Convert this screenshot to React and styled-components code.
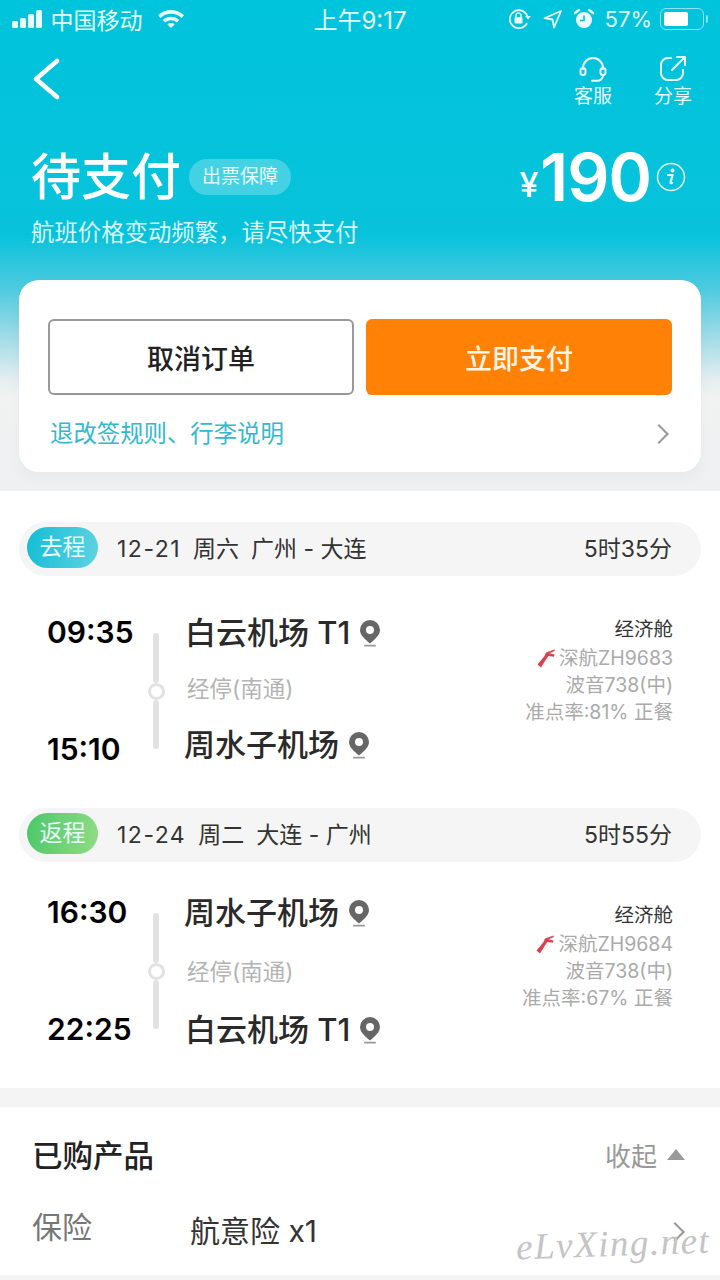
import styled, { createGlobalStyle } from "styled-components";

const Global = createGlobalStyle`
    html, body { margin: 0; padding: 0; background: #f4f4f4; }
    body { font-family: Inter, "Noto Sans CJK SC", sans-serif; }
    * { box-sizing: border-box; }
`;

const flights = [
    {
        tag: "去程", go: true, date: "12-21", day: "周六", line: "广州 - 大连", span: "5时35分", lift: 0, reach: 154,
        from: { time: "09:35", name: "白云机场 T1", shift: 1 },
        to: { time: "15:10", name: "周水子机场", shift: 0 },
        no: "深航ZH9683", ontime: "准点率:81% 正餐",
    },
    {
        tag: "返程", go: false, date: "12-24", day: "周二", line: "大连 - 广州", span: "5时55分", lift: 6, reach: 159,
        from: { time: "16:30", name: "周水子机场", shift: 0 },
        to: { time: "22:25", name: "白云机场 T1", shift: 1 },
        no: "深航ZH9684", ontime: "准点率:67% 正餐",
    },
];

const Pin = () => (
    <PinIcon viewBox="0 0 22 28">
        <path fillRule="evenodd" fill="#666" d="M11 1a10 10 0 0 1 10 10c0 5-5 9.400-10 13.500C6 20.400 1 16 1 11A10 10 0 0 1 11 1zm0 6a4 4 0 1 0 0 8 4 4 0 0 0 0-8z" />
        <rect x="5" y="25.800" width="12" height="1.800" rx="0.900" fill="#999" />
    </PinIcon>
);

const Flight = ({ data }) => (
    <section>
        <Strip>
            <Tag $go={data.go}>{data.tag}</Tag>
            <HeadText>
                <DateText>{data.date}</DateText>
                <span>{data.day}</span>
                <span>{data.line}</span>
            </HeadText>
            <span>{data.span}</span>
        </Strip>
        <Body>
            <Route $lift={data.lift}>
                <Times>
                    <Time>{data.from.time}</Time>
                    <Time>{data.to.time}</Time>
                </Times>
                <Rail>
                    <RailLine />
                    <RailDot />
                    <RailLine />
                </Rail>
                <Stations $reach={data.reach}>
                    <Station $shift={data.from.shift}>{data.from.name}<Pin /></Station>
                    <Stop>经停(南通)</Stop>
                    <Station $shift={data.to.shift}>{data.to.name}<Pin /></Station>
                </Stations>
            </Route>
            <Info>
                <Cabin>经济舱</Cabin>
                <InfoLine>
                    <svg width="18" height="19" viewBox="0 0 18 19">
                        <path fill="#d9434f" d="M0.500 15.500L7.500 7 9 3.500 17.500 0.500l.3 1.500-5.300 2.200 5 1.300-.5 2.300-5.500-.9-2.500 3.600L4 18.500z" />
                    </svg>
                    {data.no}
                </InfoLine>
                <InfoLine>波音738(中)</InfoLine>
                <InfoLine>{data.ontime}</InfoLine>
            </Info>
        </Body>
    </section>
);

const App = () => (
    <Page>
        <Global />
        <Top>
            <StatusBar>
                <StatusSide>
                    <Signal>
                        {[7, 10, 14, 18].map((h) => <i key={h} style={{ height: h }} />)}
                    </Signal>
                    <span>中国移动</span>
                    <svg width="28" height="20" viewBox="0 0 28 20" style={{ marginLeft: 5 }}>
                        <path fill="#eafcff" d="M14 1c5 0 9.600 2 13 5.300l-2.500 2.600A15 15 0 0 0 14 4.700 15 15 0 0 0 3.500 8.900L1 6.300A18.800 18.800 0 0 1 14 1z" />
                        <path fill="#eafcff" d="M14 7.700c3.200 0 6.100 1.200 8.300 3.300l-2.500 2.600A8.400 8.400 0 0 0 14 11.300a8.400 8.400 0 0 0-5.800 2.300L5.700 11A12 12 0 0 1 14 7.700z" />
                        <path fill="#eafcff" d="M14 14c1.400 0 2.700.5 3.600 1.400L14 19l-3.600-3.600c.9-.9 2.200-1.400 3.600-1.400z" />
                    </svg>
                </StatusSide>
                <Clock>上午9:17</Clock>
                <StatusSide $right>
                    <svg width="24" height="22" viewBox="0 0 24 22" fill="none" stroke="#eafcff" strokeWidth="1.800">
                        <path d="M19 15a9 9 0 1 1 .6-6" />
                        <path d="M17 8h6l-3 3.500z" fill="#eafcff" stroke="none" />
                        <rect x="6.500" y="9" width="8" height="6.500" rx="1" fill="#eafcff" stroke="none" />
                        <path d="M8 9V7.500a2.500 2.500 0 0 1 5 0V9" strokeWidth="1.400" />
                    </svg>
                    <svg width="20" height="20" viewBox="0 0 20 20" fill="none" stroke="#eafcff" strokeWidth="1.800" strokeLinejoin="round" style={{ marginLeft: 11 }}>
                        <path d="M18 2L1.500 9.200l8 1.300 1.500 8z" />
                    </svg>
                    <svg width="22" height="22" viewBox="0 0 22 22" style={{ marginLeft: 10 }}>
                        <circle cx="11" cy="12" r="8" fill="#eafcff" />
                        <path d="M11 7.500V12.500H7" fill="none" stroke="#00c3dc" strokeWidth="1.600" />
                        <path d="M2 5l4-3M20 5l-4-3" stroke="#eafcff" strokeWidth="2.400" strokeLinecap="round" />
                    </svg>
                    <Percent>57%</Percent>
                    <Battery><BatteryFill style={{ width: "57%" }} /></Battery>
                    <BatteryCap />
                </StatusSide>
            </StatusBar>

            <Nav>
                <svg width="28" height="42" viewBox="0 0 28 42" fill="none" stroke="#fff" strokeWidth="4.500" strokeLinecap="round" strokeLinejoin="round">
                    <path d="M24 3L3 21l21 18" />
                </svg>
                <NavActions>
                    <NavAction>
                        <svg width="30" height="28" viewBox="0 0 30 28" fill="none" stroke="#eafcff" strokeWidth="2" strokeLinecap="round">
                            <path d="M5 14V13a10 10 0 0 1 20 0v1" />
                            <path d="M5 13a2.500 2.500 0 0 1 2.500 2.500v2a2.500 2.500 0 0 1-5 0v-2A2.500 2.500 0 0 1 5 13z" />
                            <path d="M25 13a2.500 2.500 0 0 0-2.500 2.500v2a2.500 2.500 0 0 0 5 0v-2A2.500 2.500 0 0 0 25 13z" />
                            <path d="M25 21c-.8 3-3 4.800-6 4.800h-5" />
                        </svg>
                        客服
                    </NavAction>
                    <NavAction>
                        <svg width="28" height="28" viewBox="0 0 28 28" fill="none" stroke="#eafcff" strokeWidth="2" strokeLinecap="round" strokeLinejoin="round">
                            <path d="M12 3H9a7 7 0 0 0-7 7v8a7 7 0 0 0 7 7h8a7 7 0 0 0 7-7v-3" />
                            <path d="M13 15L26 2M18 2h8v8" />
                        </svg>
                        分享
                    </NavAction>
                </NavActions>
            </Nav>

            <Summary>
                <div>
                    <TitleRow>
                        <Title>待支付</Title>
                        <Badge>出票保障</Badge>
                    </TitleRow>
                    <Subtitle>航班价格变动频繁，请尽快支付</Subtitle>
                </div>
                <Price>
                    <Yen>¥</Yen>190
                    <svg width="30" height="30" viewBox="0 0 30 30" style={{ marginLeft: 5 }}>
                        <circle cx="15" cy="15" r="13.500" fill="none" stroke="#eafcff" strokeWidth="1.500" />
                        <circle cx="16.500" cy="8.500" r="2" fill="#eafcff" />
                        <path d="M12 13h4.500l-2 7.500c-.2.800.5 1 1.500.4" fill="none" stroke="#eafcff" strokeWidth="2.200" strokeLinecap="round" />
                    </svg>
                </Price>
            </Summary>

            <Card>
                <Buttons>
                    <Button>取消订单</Button>
                    <Button $primary>立即支付</Button>
                </Buttons>
                <RuleLink>
                    退改签规则、行李说明
                    <Chevron />
                </RuleLink>
            </Card>
        </Top>

        <Flights>
            {flights.map((f) => <Flight key={f.tag} data={f} />)}
        </Flights>

        <Products>
            <ProductsHead>
                已购产品
                <Collapse>收起<Triangle /></Collapse>
            </ProductsHead>
            <ProductRow>
                <ProductLabel>保险</ProductLabel>
                <ProductName>航意险 x1</ProductName>
                <RowChevron />
            </ProductRow>
            <Watermark>eLvXing.net</Watermark>
        </Products>
    </Page>
);

const Page = styled.div`
    width: 720px;
    height: 1280px;
    overflow: hidden;
    background: #f4f4f4;
`;

const Top = styled.header`
    height: 491px;
    padding-top: 1px;
    background: linear-gradient(#00c3dc 0, #08c2db 235px, #50cbdf 290px, #a5dde8 340px, #e5eef0 380px, #f1f2f2 396px, #eef0f1 491px);
`;

const StatusBar = styled.div`
    display: grid;
    grid-template-columns: 1fr auto 1fr;
    align-items: center;
    height: 36px;
    margin-bottom: -4px;
    padding: 0 12px 4px;
    color: #e4fbff;
    font-size: 23px;
`;

const StatusSide = styled.div`
    display: flex;
    align-items: center;
    justify-content: ${(p) => (p.$right ? "flex-end" : "flex-start")};
    gap: ${(p) => (p.$right ? "0" : "9px")};
`;

const Signal = styled.div`
    display: flex;
    align-items: flex-end;
    gap: 2.500px;
    height: 18px;
    i { display: block; width: 5.500px; background: #eafcff; border-radius: 1.500px; }
`;

const Clock = styled.div`
    font-size: 24px;
`;

const Percent = styled.span`
    margin: 0 8px 0 10px;
    font-size: 22px;
`;

const Battery = styled.div`
    width: 44px;
    height: 22px;
    padding: 3px;
    border: 1.500px solid #8be4ef;
    border-radius: 6px;
`;

const BatteryFill = styled.div`
    height: 100%;
    min-width: 24px;
    background: #fff;
    border-radius: 2px;
`;

const BatteryCap = styled.div`
    width: 2px;
    height: 8px;
    margin-left: 2px;
    background: #8be4ef;
    border-radius: 0 2px 2px 0;
`;

const Nav = styled.nav`
    display: flex;
    justify-content: space-between;
    align-items: flex-start;
    height: 109px;
    padding: 25px 28px 0 33px;
`;

const NavActions = styled.div`
    display: flex;
    gap: 42px;
    margin-top: -3px;
`;

const NavAction = styled.div`
    display: flex;
    flex-direction: column;
    align-items: center;
    color: #e4fbff;
    font-size: 19px;
    line-height: 27px;
`;

const Summary = styled.div`
    display: flex;
    justify-content: space-between;
    align-items: flex-start;
    padding: 0 34px 0 31px;
`;

const TitleRow = styled.div`
    display: flex;
    align-items: center;
    height: 70px;
`;

const Title = styled.h1`
    margin: 0;
    color: #fff;
    font-size: 50px;
    font-weight: 500;
    line-height: 70px;
`;

const Badge = styled.span`
    margin-left: 8px;
    padding: 0 13px;
    height: 36px;
    border-radius: 18px;
    background: rgba(255, 255, 255, 0.25);
    color: #e8fbfe;
    font-size: 19px;
    line-height: 36px;
`;

const Subtitle = styled.div`
    margin-top: 4px;
    color: #d8f7fb;
    font-size: 23.400px;
    line-height: 34px;
`;

const Price = styled.div`
    display: flex;
    align-items: center;
    height: 70px;
    color: #fff;
    font-size: 66px;
    font-weight: 600;
    letter-spacing: -1px;
`;

const Yen = styled.span`
    margin: 14px 3px 0 0;
    font-size: 34px;
    font-weight: 500;
`;

const Card = styled.div`
    margin: 30px 19px 0;
    padding: 39px 29px 0;
    height: 192px;
    background: #fff;
    border-radius: 20px;
    box-shadow: 0 6px 14px rgba(120, 130, 135, 0.06);
`;

const Buttons = styled.div`
    display: grid;
    grid-template-columns: 1fr 1fr;
    gap: 12px;
`;

const Button = styled.button`
    height: 76px;
    padding: 0;
    border: ${(p) => (p.$primary ? "none" : "2px solid #999")};
    border-radius: 6px;
    background: ${(p) => (p.$primary ? "#ff8206" : "#fff")};
    color: ${(p) => (p.$primary ? "#fff5e4" : "#222")};
    font-family: inherit;
    font-size: 27px;
    font-weight: 500;
`;

const RuleLink = styled.div`
    display: flex;
    justify-content: space-between;
    align-items: center;
    margin-top: 20px;
    padding-left: 2px;
    color: #32b9cd;
    font-size: 23.400px;
    line-height: 38px;
`;

const Chevron = styled.i`
    display: block;
    flex: none;
    width: 14px;
    height: 14px;
    margin-right: 6px;
    border-top: 2.500px solid #999;
    border-right: 2.500px solid #999;
    transform: rotate(45deg);
`;

const RowChevron = styled(Chevron)`
    margin: 5px 3px 0 0;
`;

const Flights = styled.main`
    height: 597px;
    padding: 31px 19px 0;
    background: #fff;
`;

const Strip = styled.div`
    display: flex;
    align-items: center;
    height: 54px;
    padding: 0 29px 4px 8px;
    background: #f5f5f5;
    border-radius: 27px;
    color: #333;
    font-size: 23px;
`;

const Tag = styled.span`
    width: 71px;
    height: 41px;
    border-radius: 21px;
    background: ${(p) => (p.$go
        ? "linear-gradient(100deg, #13bdd6, #5fd3e2)"
        : "linear-gradient(100deg, #4cc76a, #8fdd85)")};
    color: #e9fbfb;
    font-size: 23px;
    line-height: 41px;
    text-align: center;
`;

const HeadText = styled.div`
    flex: 1;
    display: flex;
    align-items: baseline;
    gap: 12px;
    margin-left: 19px;
`;

const DateText = styled.span`
    letter-spacing: 1.500px;
`;

const Body = styled.div`
    display: flex;
    justify-content: space-between;
    height: 232px;
    padding: 36px 28px 0 28px;
`;

const Route = styled.div`
    display: flex;
    height: 160px;
    margin-top: ${(p) => -p.$lift}px;
`;

const Times = styled.div`
    display: flex;
    flex-direction: column;
    justify-content: space-between;
    width: 93px;
    height: 157px;
`;

const Time = styled.div`
    color: #000;
    font-size: 30px;
    font-weight: 600;
    line-height: 40px;
`;

const Rail = styled.div`
    display: flex;
    flex-direction: column;
    align-items: center;
    width: 32px;
    height: 116px;
    margin-top: 21px;
`;

const RailLine = styled.div`
    flex: 1;
    width: 6px;
    background: #e2e2e2;
    border-radius: 3px;
`;

const RailDot = styled.div`
    width: 17px;
    height: 17px;
    flex: none;
    border: 3.500px solid #e2e2e2;
    border-radius: 50%;
`;

const Stations = styled.div`
    display: flex;
    flex-direction: column;
    justify-content: space-between;
    height: ${(p) => p.$reach}px;
    margin-left: 14px;
`;

const Station = styled.div`
    display: flex;
    align-items: center;
    margin-left: ${(p) => p.$shift - 2}px;
    color: #2a2a2a;
    font-size: 31px;
    font-weight: 500;
    line-height: 42px;
    white-space: nowrap;
`;

const PinIcon = styled.svg`
    width: 22px;
    height: 28px;
    margin-left: 9px;
`;

const Stop = styled.div`
    margin-left: 1px;
    color: #b4b4b4;
    font-size: 22.500px;
    line-height: 30px;
`;

const Info = styled.div`
    display: flex;
    flex-direction: column;
    align-items: flex-end;
    padding-top: 4px;
    font-size: 19.500px;
    line-height: 27px;
`;

const Cabin = styled.div`
    color: #333;
    margin-bottom: 2px;
`;

const InfoLine = styled.div`
    display: flex;
    align-items: center;
    gap: 4px;
    color: #aaa;
    white-space: nowrap;
`;

const Products = styled.section`
    position: relative;
    height: 168px;
    margin-top: 19px;
    padding: 25px 35px 0 32px;
    background: #fff;
`;

const ProductsHead = styled.div`
    display: flex;
    justify-content: space-between;
    align-items: center;
    height: 44px;
    color: #222;
    font-size: 30.500px;
    font-weight: 500;
`;

const Collapse = styled.span`
    display: flex;
    align-items: center;
    gap: 10px;
    color: #999;
    font-size: 26px;
    font-weight: 400;
`;

const Triangle = styled.i`
    width: 0;
    height: 0;
    border-left: 9px solid transparent;
    border-right: 9px solid transparent;
    border-bottom: 11px solid #999;
`;

const ProductRow = styled.div`
    display: flex;
    align-items: center;
    margin-top: 31px;
`;

const ProductLabel = styled.span`
    width: 158px;
    margin-top: -8px;
    color: #777;
    font-size: 30px;
`;

const ProductName = styled.span`
    flex: 1;
    color: #333;
    font-size: 30px;
`;

const Watermark = styled.div`
    position: absolute;
    right: 10px;
    top: 115px;
    color: #c4c4c4;
    font-family: "Liberation Serif", serif;
    font-size: 37px;
    font-style: italic;
    letter-spacing: 1.500px;
    transform: rotate(-2deg);
`;

export default App;
